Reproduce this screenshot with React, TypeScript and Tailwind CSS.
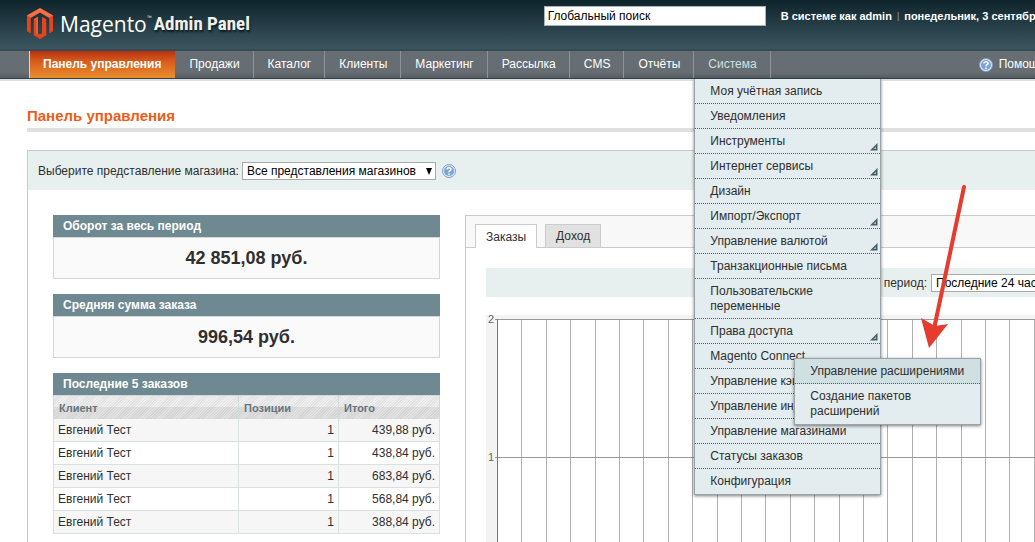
import type { ReactNode } from "react";

const navItems = ["Продажи", "Каталог", "Клиенты", "Маркетинг", "Рассылка", "CMS", "Отчёты"];

type MenuItem = { label: string; nested?: boolean; children?: string[] };

const systemMenu: MenuItem[] = [
  { label: "Моя учётная запись" },
  { label: "Уведомления" },
  { label: "Инструменты", nested: true },
  { label: "Интернет сервисы", nested: true },
  { label: "Дизайн" },
  { label: "Импорт/Экспорт", nested: true },
  { label: "Управление валютой", nested: true },
  { label: "Транзакционные письма" },
  { label: "Пользовательские переменные" },
  { label: "Права доступа", nested: true },
  { label: "Magento Connect", children: ["Управление расширениями", "Создание пакетов расширений"] },
  { label: "Управление кэшем" },
  { label: "Управление индексами" },
  { label: "Управление магазинами" },
  { label: "Статусы заказов" },
  { label: "Конфигурация" },
];

const orders = ["439,88", "438,84", "683,84", "568,84", "388,84"];

function Logo() {
  return (
    <a href="#" className="flex items-center text-white">
      <svg width="26" height="31" viewBox="0 0 26 31" aria-hidden="true">
        <path d="M0 7.6v15.6l3.8 2.2V9.8L13 4.4l9.2 5.4v15.6l3.8-2.2V7.6L13 0z" fill="#e8431f" />
        <path d="M0 7.6 13 0l13 7.6-3.8 2.2L13 4.4 3.8 9.8z" fill="#f36f48" />
        <path d="M6.700 11.200 11 8.800v16.600l2 1.200 2-1.200V8.800l4.300 2.400v16.100L13 31l-6.300-3.700z" fill="#e8431f" />
        <path d="M6.700 11.200 11 8.800v16.600l-2 1V12.500z" fill="#f15a33" />
      </svg>
      <span className="ml-[7px] pt-0.5 font-['Open_Sans',sans-serif] text-[21px] leading-8 font-medium">Magento</span>
      <span className="mb-3 text-[5px] leading-none">™</span>
      <span className="ml-0.5 pt-0.5 font-['Liberation_Sans_Narrow','Roboto_Condensed',Roboto,sans-serif] text-[19px] leading-8 font-bold text-[#f0f1ee] [text-shadow:1px_2px_2px_#0b1a1f]">
        Admin Panel
      </span>
    </a>
  );
}

function HelpIcon() {
  return (
    <svg width="14" height="14" viewBox="0 0 14 14" className="shrink-0" aria-hidden="true">
      <circle cx="7" cy="7" r="6.500" fill="#dfe9f5" stroke="#7d9fc9" />
      <circle cx="7" cy="7" r="5" fill="#7ba3d3" />
      <path d="M5 5.600C5 3.200 9 3.200 9 5.400 9 6.800 7 6.700 7 8.200M7 9.400v1.500" fill="none" stroke="#fff" strokeWidth="1.500" />
    </svg>
  );
}

function NestedMark() {
  return (
    <svg width="8" height="8" viewBox="0 0 8 8" className="absolute right-0.5 bottom-0.5" aria-hidden="true">
      <path d="M0 7.500 7.500 0v7.500z" fill="#465c67" />
      <path d="M3.500 6 6 3.500V6z" fill="#a9b9bf" />
    </svg>
  );
}

function SelectBox({ id, options, className }: { id: string; options: string[]; className: string }) {
  return (
    <span className="relative flex shrink-0">
      <select
        id={id}
        className={`h-[18px] appearance-none border border-[#a9a9a9] bg-white pl-1 text-[12px] leading-4 text-black ${className}`}
      >
        {options.map((o) => (
          <option key={o}>{o}</option>
        ))}
      </select>
      <svg width="6" height="7" viewBox="0 0 6 7" className="pointer-events-none absolute top-1.5 right-[7px]" aria-hidden="true">
        <path d="M0 0h6L3 7z" fill="#000" />
      </svg>
    </span>
  );
}

function SystemMenu() {
  return (
    <ul className="absolute top-7 left-0 z-10 w-[187px] border border-t-0 border-[#9ba3a6] bg-[#e3ecee] pb-px text-[#2f2f2f] shadow-[0_1px_3px_rgba(0,0,0,0.5)]">
      {systemMenu.map((item) => (
        <li key={item.label} className="relative border-b border-dotted border-[#465f6b] last:border-b-0">
          <a href="#" className="block pt-[5px] pr-5 pb-1 pl-[15px] leading-[15px]">
            {item.label}
          </a>
          {item.nested && <NestedMark />}
          {item.children && (
            <ul className="absolute top-3.5 left-[99px] z-20 w-[187px] border border-[#9ba3a6] bg-[#e3ecee] pb-px shadow-[0_1px_3px_rgba(0,0,0,0.5)]">
              {item.children.map((child) => (
                <li
                  key={child}
                  className="border-b border-dotted border-[#465f6b] first:bg-[#d0dfe2] last:border-b-0"
                >
                  <a href="#" className="block pt-[5px] pr-3 pb-1 pl-[15px] leading-[15px]">
                    {child}
                  </a>
                </li>
              ))}
            </ul>
          )}
        </li>
      ))}
    </ul>
  );
}

function NavBar() {
  return (
    <nav className="flex items-stretch border-t-2 border-b border-t-[#344b55] border-b-[#2d444f] bg-linear-to-b from-[#666e73] from-80% to-[#555b60] pr-[75px] pl-[29px] text-[12px] leading-[15px] text-white shadow-[0_2px_0_#dedede]">
      <ul className="flex">
        <li className="border-l border-[#d8d8d8] bg-linear-to-b from-[#b5310f] via-[#d95d1d] via-40% to-[#e98d2c]">
          <a href="#" className="block py-1.5 pr-3.5 pl-[13px] font-bold">
            Панель управления
          </a>
        </li>
        {navItems.map((label) => (
          <li key={label} className="border-r border-[#8d9396]">
            <a href="#" className="block py-1.5 pr-[13px] pl-3.5">
              {label}
            </a>
          </li>
        ))}
        <li className="relative border-r border-[#8d9396]">
          <a href="#" className="block py-1.5 pr-[13px] pl-3.5 text-[#cfe0e4]">
            Система
          </a>
          <SystemMenu />
        </li>
      </ul>
      <a href="#" className="ml-auto flex items-center gap-1.5 whitespace-nowrap">
        <HelpIcon />
        Помощь
      </a>
    </nav>
  );
}

function Card({ title, children }: { title: string; children: ReactNode }) {
  return (
    <section>
      <h2 className="bg-[#6f8992] px-2.5 text-[12px] leading-[22px] font-bold text-white">{title}</h2>
      {children}
    </section>
  );
}

function Total({ value }: { value: string }) {
  return (
    <p className="border border-[#d6d6d6] bg-[#fafafa] text-center text-[18px] leading-10 font-bold text-[#2f2f2f]">
      {value}
    </p>
  );
}

function OrdersTable() {
  return (
    <table className="w-full table-fixed border-collapse border border-[#d2d7d8]">
      <colgroup>
        <col />
        <col className="w-[100px]" />
        <col className="w-[101px]" />
      </colgroup>
      <thead>
        <tr className="bg-[linear-gradient(to_bottom,transparent_50%,rgba(0,0,0,0.06)_50%),repeating-linear-gradient(135deg,#e2e2e2_0_1px,#efefef_1px_2px)] text-left text-[11px] text-[#67767e]">
          {["Клиент", "Позиции", "Итого"].map((h) => (
            <th key={h} scope="col" className="h-[23px] border-x border-[#d2d7d8] px-[5px] pt-0.5 pb-0 leading-4 font-bold">
              {h}
            </th>
          ))}
        </tr>
      </thead>
      <tbody>
        {orders.map((sum) => (
          <tr key={sum} className="odd:bg-[#f6f6f6]">
            <td className="h-[23px] border border-[#dadfe0] border-t-0 px-1 py-0 leading-4">Евгений Тест</td>
            <td className="border border-[#dadfe0] border-t-0 px-1 py-0 text-right leading-4">1</td>
            <td className="border border-[#dadfe0] border-t-0 px-1 py-0 text-right leading-4">{sum} руб.</td>
          </tr>
        ))}
      </tbody>
    </table>
  );
}

function Chart() {
  const lines = Array.from({ length: 25 }, (_, i) => Math.round(11 + i * 24.4) + 0.5);
  return (
    <svg width="612" height="300" viewBox="0 0 612 300" className="block overflow-visible" role="img" aria-label="Заказы">
      <rect width="612" height="300" fill="#f3f3f3" />
      <rect x="11" y="4" width="587" height="277" fill="#fff" />
      {lines.map((x) => (
        <path key={x} d={`M${x} 4V281`} stroke="#b0b0b0" />
      ))}
      <path d="M9 4.500H598M9 142.500H598" stroke="#999" />
      <path d="M11.500 4V281" stroke="#777" />
      <g fill="#666" fontSize="11" textAnchor="end">
        <text x="8" y="8">2</text>
        <text x="8" y="146">1</text>
      </g>
    </svg>
  );
}

function Diagrams() {
  return (
    <section className="min-w-[655px] flex-1 border border-[#cbcbcb]">
      <div className="flex items-end gap-2 border-b border-[#cbcbcb] bg-[#f8f8f8] pt-2 pl-[9px]">
        <button type="button" className="-mb-px h-6 border border-b-0 border-[#cbcbcb] bg-white px-2.5">
          Заказы
        </button>
        <button type="button" className="h-[23px] border border-b-0 border-[#cbcbcb] bg-[#e1e1e1] px-2.5">
          Доход
        </button>
      </div>
      <div className="px-5 pt-5">
        <div className="flex h-[29px] items-center justify-end gap-1 bg-[#e7efef] pr-5">
          <label htmlFor="period">Выбрать период:</label>
          <SelectBox id="period" options={["Последние 24 часа"]} className="w-[130px]" />
          <HelpIcon />
        </div>
        <div className="mt-[18px]">
          <Chart />
        </div>
      </div>
    </section>
  );
}

export default function App() {
  return (
    <div className="relative h-screen overflow-hidden bg-white font-['Liberation_Sans',Arial,sans-serif] text-[12px] text-[#2f2f2f]">
      <div className="min-w-[1120px]">
        <header className="flex h-[49px] items-start bg-linear-to-b from-[#0f252c] to-[#3c5660] pt-1.5 pr-[41px] pl-[27px]">
          <Logo />
          <input
            type="text"
            aria-label="Поиск"
            defaultValue="Глобальный поиск"
            className="ml-auto h-5 w-[222px] shrink-0 border border-[#a9b4b8] bg-white px-[3px] text-[12px] text-black"
          />
          <p className="ml-[15px] flex gap-[5px] text-[11px] leading-5 font-bold whitespace-nowrap text-white">
            <span>В системе как admin</span>
            <span className="text-[9px] font-normal text-[#a59d8c]">|</span>
            <span>понедельник, 3 сентября 2018 г.</span>
          </p>
        </header>
        <NavBar />
        <main className="px-[27px] pt-7">
          <h1 className="border-b-4 border-[#dfdfdf] pb-[3px] text-[15px] leading-[18px] font-bold text-[#eb5e18]">
            Панель управления
          </h1>
          <div className="mt-[18px] border border-[#cbcbcb]">
            <div className="flex h-[39px] items-center gap-[3px] bg-[#e7efef] pl-2.5">
              <label htmlFor="store">Выберите представление магазина:</label>
              <SelectBox id="store" options={["Все представления магазинов"]} className="mr-[3px] w-[194px]" />
              <HelpIcon />
            </div>
            <div className="flex gap-[25px] px-[25px] pt-[25px]">
              <div className="flex w-[387px] shrink-0 flex-col gap-[15px]">
                <Card title="Оборот за весь период">
                  <Total value="42 851,08 руб." />
                </Card>
                <Card title="Средняя сумма заказа">
                  <Total value="996,54 руб." />
                </Card>
                <Card title="Последние 5 заказов">
                  <OrdersTable />
                </Card>
              </div>
              <Diagrams />
            </div>
          </div>
        </main>
      </div>
      <svg width="46" height="164" viewBox="0 0 46 164" className="pointer-events-none absolute top-[184px] left-[921px] z-30" aria-hidden="true">
        <path d="M43 3 13 145" stroke="#e53c2f" strokeWidth="4" strokeLinecap="round" />
        <path d="M0 134 14 142 27 140 8 164z" fill="#e53c2f" />
      </svg>
    </div>
  );
}
